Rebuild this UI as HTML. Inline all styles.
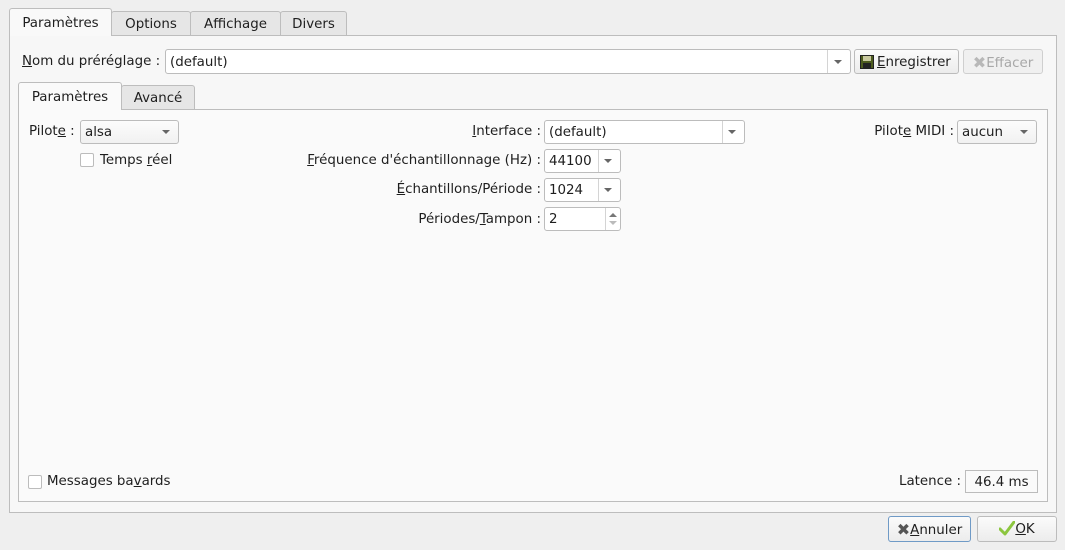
<!DOCTYPE html>
<html><head><meta charset="utf-8"><style>
*{box-sizing:border-box;margin:0;padding:0}
body{width:1065px;height:550px;background:#efefef;font-family:"DejaVu Sans","Liberation Sans",sans-serif;font-size:13.4px;color:#1e1e1e;position:relative;overflow:hidden}
.a{position:absolute}
.tab{position:absolute;border:1px solid #bdbdbd;border-bottom:none;background:#e6e6e6;border-radius:3px 3px 0 0;text-align:center;white-space:nowrap}
.sel{background:#f9f9f9}
.pane{position:absolute;border:1px solid #bdbdbd;background:#f9f9f9}
.box{position:absolute;border:1px solid #bcbcbc;border-radius:3px;background:#fff;padding-left:4px;white-space:nowrap}
.cb{position:absolute;border:1px solid #bcbcbc;border-radius:3px;background:linear-gradient(#fcfcfc,#f1f1f1);padding-left:4px;white-space:nowrap}
.arr{position:absolute;right:8px;top:50%;margin-top:-2px;width:0;height:0;border-left:4px solid transparent;border-right:4px solid transparent;border-top:4px solid #666}
.sep{position:absolute;top:0;bottom:0;width:1px;background:#d4d4d4}
.btn{position:absolute;border:1px solid #bcbcbc;border-radius:3px;background:linear-gradient(#fbfbfb,#ececec);white-space:nowrap;text-align:center}
.lbl{position:absolute;white-space:nowrap}
.r{text-align:right}
u{text-decoration:underline}
.chk{position:absolute;width:14px;height:14px;border:1px solid #bcbcbc;border-radius:2px;background:#fff}
.x{font-size:16px;vertical-align:-1px}
</style></head><body>
<div class="pane" style="left:9px;top:35px;width:1048px;height:478px;background:#f7f7f7"></div>
<div class="tab sel" style="left:9px;top:8px;width:103px;height:28px;line-height:30px;">Paramètres</div>
<div class="tab" style="left:111px;top:11px;width:80px;height:24px;line-height:26px;">Options</div>
<div class="tab" style="left:190px;top:11px;width:91px;height:24px;line-height:26px;">Affichage</div>
<div class="tab" style="left:280px;top:11px;width:67px;height:24px;line-height:26px;">Divers</div>

<div class="lbl" style="left:22px;top:54px"><u>N</u>om du préréglage :</div>
<div class="box" style="left:165px;top:49px;width:686px;height:25px;line-height:25px">(default)<div class="sep" style="right:22px"></div><div class="arr"></div></div>
<div class="btn" style="left:854px;top:49px;width:105px;height:25px;line-height:25px;padding-left:2px;text-align:left"><svg class="a" style="left:5px;top:5px" width="14" height="14" viewBox="0 0 14 14"><rect x="0.5" y="0.5" width="13" height="13" fill="#4d5c1e" stroke="#222"/><rect x="3" y="1" width="8" height="5" fill="#c9c9a0"/><rect x="3" y="8" width="8" height="5" fill="#222"/></svg><span style="margin-left:20px"><u>E</u>nregistrer</span></div>
<div class="btn" style="left:963px;top:49px;width:80px;height:25px;line-height:25px;color:#a8a8a8;background:#f0f0f0;border-color:#cfcfcf"><span class="x" style="color:#b8b8b8">✖</span>Ef<u>f</u>acer</div>

<div class="pane" style="left:18px;top:109px;width:1030px;height:393px;background:#fafafa"></div>
<div class="tab sel" style="left:18px;top:82px;width:104px;height:28px;line-height:30px;background:#fafafa">Paramètres</div>
<div class="tab" style="left:121px;top:85px;width:74px;height:24px;line-height:26px;">Avancé</div>

<div class="lbl" style="left:29px;top:124px">Pilot<u>e</u> :</div>
<div class="cb" style="left:80px;top:120px;width:99px;height:24px;line-height:24px">alsa<div class="arr"></div></div>
<div class="chk" style="left:80px;top:153px"></div>
<div class="lbl" style="left:100px;top:153px">Temps <u>r</u>éel</div>

<div class="lbl r" style="right:524px;top:124px"><u>I</u>nterface :</div>
<div class="box" style="left:544px;top:120px;width:201px;height:24px;line-height:24px">(default)<div class="sep" style="right:21px"></div><div class="arr"></div></div>
<div class="lbl r" style="right:524px;top:153px"><u>F</u>réquence d'échantillonnage (Hz) :</div>
<div class="box" style="left:544px;top:149px;width:77px;height:24px;line-height:24px">44100<div class="sep" style="right:21px"></div><div class="arr"></div></div>
<div class="lbl r" style="right:524px;top:182px"><u>É</u>chantillons/Période :</div>
<div class="box" style="left:544px;top:178px;width:77px;height:24px;line-height:24px">1024<div class="sep" style="right:21px"></div><div class="arr"></div></div>
<div class="lbl r" style="right:524px;top:212px">Périodes/<u>T</u>ampon :</div>
<div class="box" style="left:544px;top:207px;width:77px;height:24px;line-height:24px">2<div class="sep" style="right:14px"></div>
<div class="a" style="right:3px;top:5px;border-left:4px solid transparent;border-right:4px solid transparent;border-bottom:4px solid #777"></div>
<div class="a" style="right:3px;top:13px;border-left:4px solid transparent;border-right:4px solid transparent;border-top:4px solid #bbb"></div></div>

<div class="lbl r" style="right:111px;top:124px">Pilot<u>e</u> MIDI :</div>
<div class="cb" style="left:957px;top:120px;width:80px;height:24px;line-height:24px">aucun<div class="arr"></div></div>

<div class="chk" style="left:28px;top:475px"></div>
<div class="lbl" style="left:47px;top:474px">Messages ba<u>v</u>ards</div>
<div class="lbl r" style="right:104px;top:474px">Latence :</div>
<div class="a" style="left:965px;top:470px;width:73px;height:23px;border:1px solid #bcbcbc;background:#fafafa;text-align:center;line-height:23px">46.4 ms</div>

<div class="btn" style="left:888px;top:516px;width:83px;height:26px;line-height:26px;border-color:#6f9ac6"><span class="x" style="color:#555">✖</span><u>A</u>nnuler</div>
<div class="btn" style="left:977px;top:516px;width:80px;height:26px;line-height:26px"><svg style="vertical-align:-3px" width="16" height="15" viewBox="0 0 16 15"><path d="M1 8 L6 13 L15 1" fill="none" stroke="#8cc63f" stroke-width="3" stroke-linecap="round" stroke-linejoin="round"/></svg><u>O</u>K</div>
</body></html>
